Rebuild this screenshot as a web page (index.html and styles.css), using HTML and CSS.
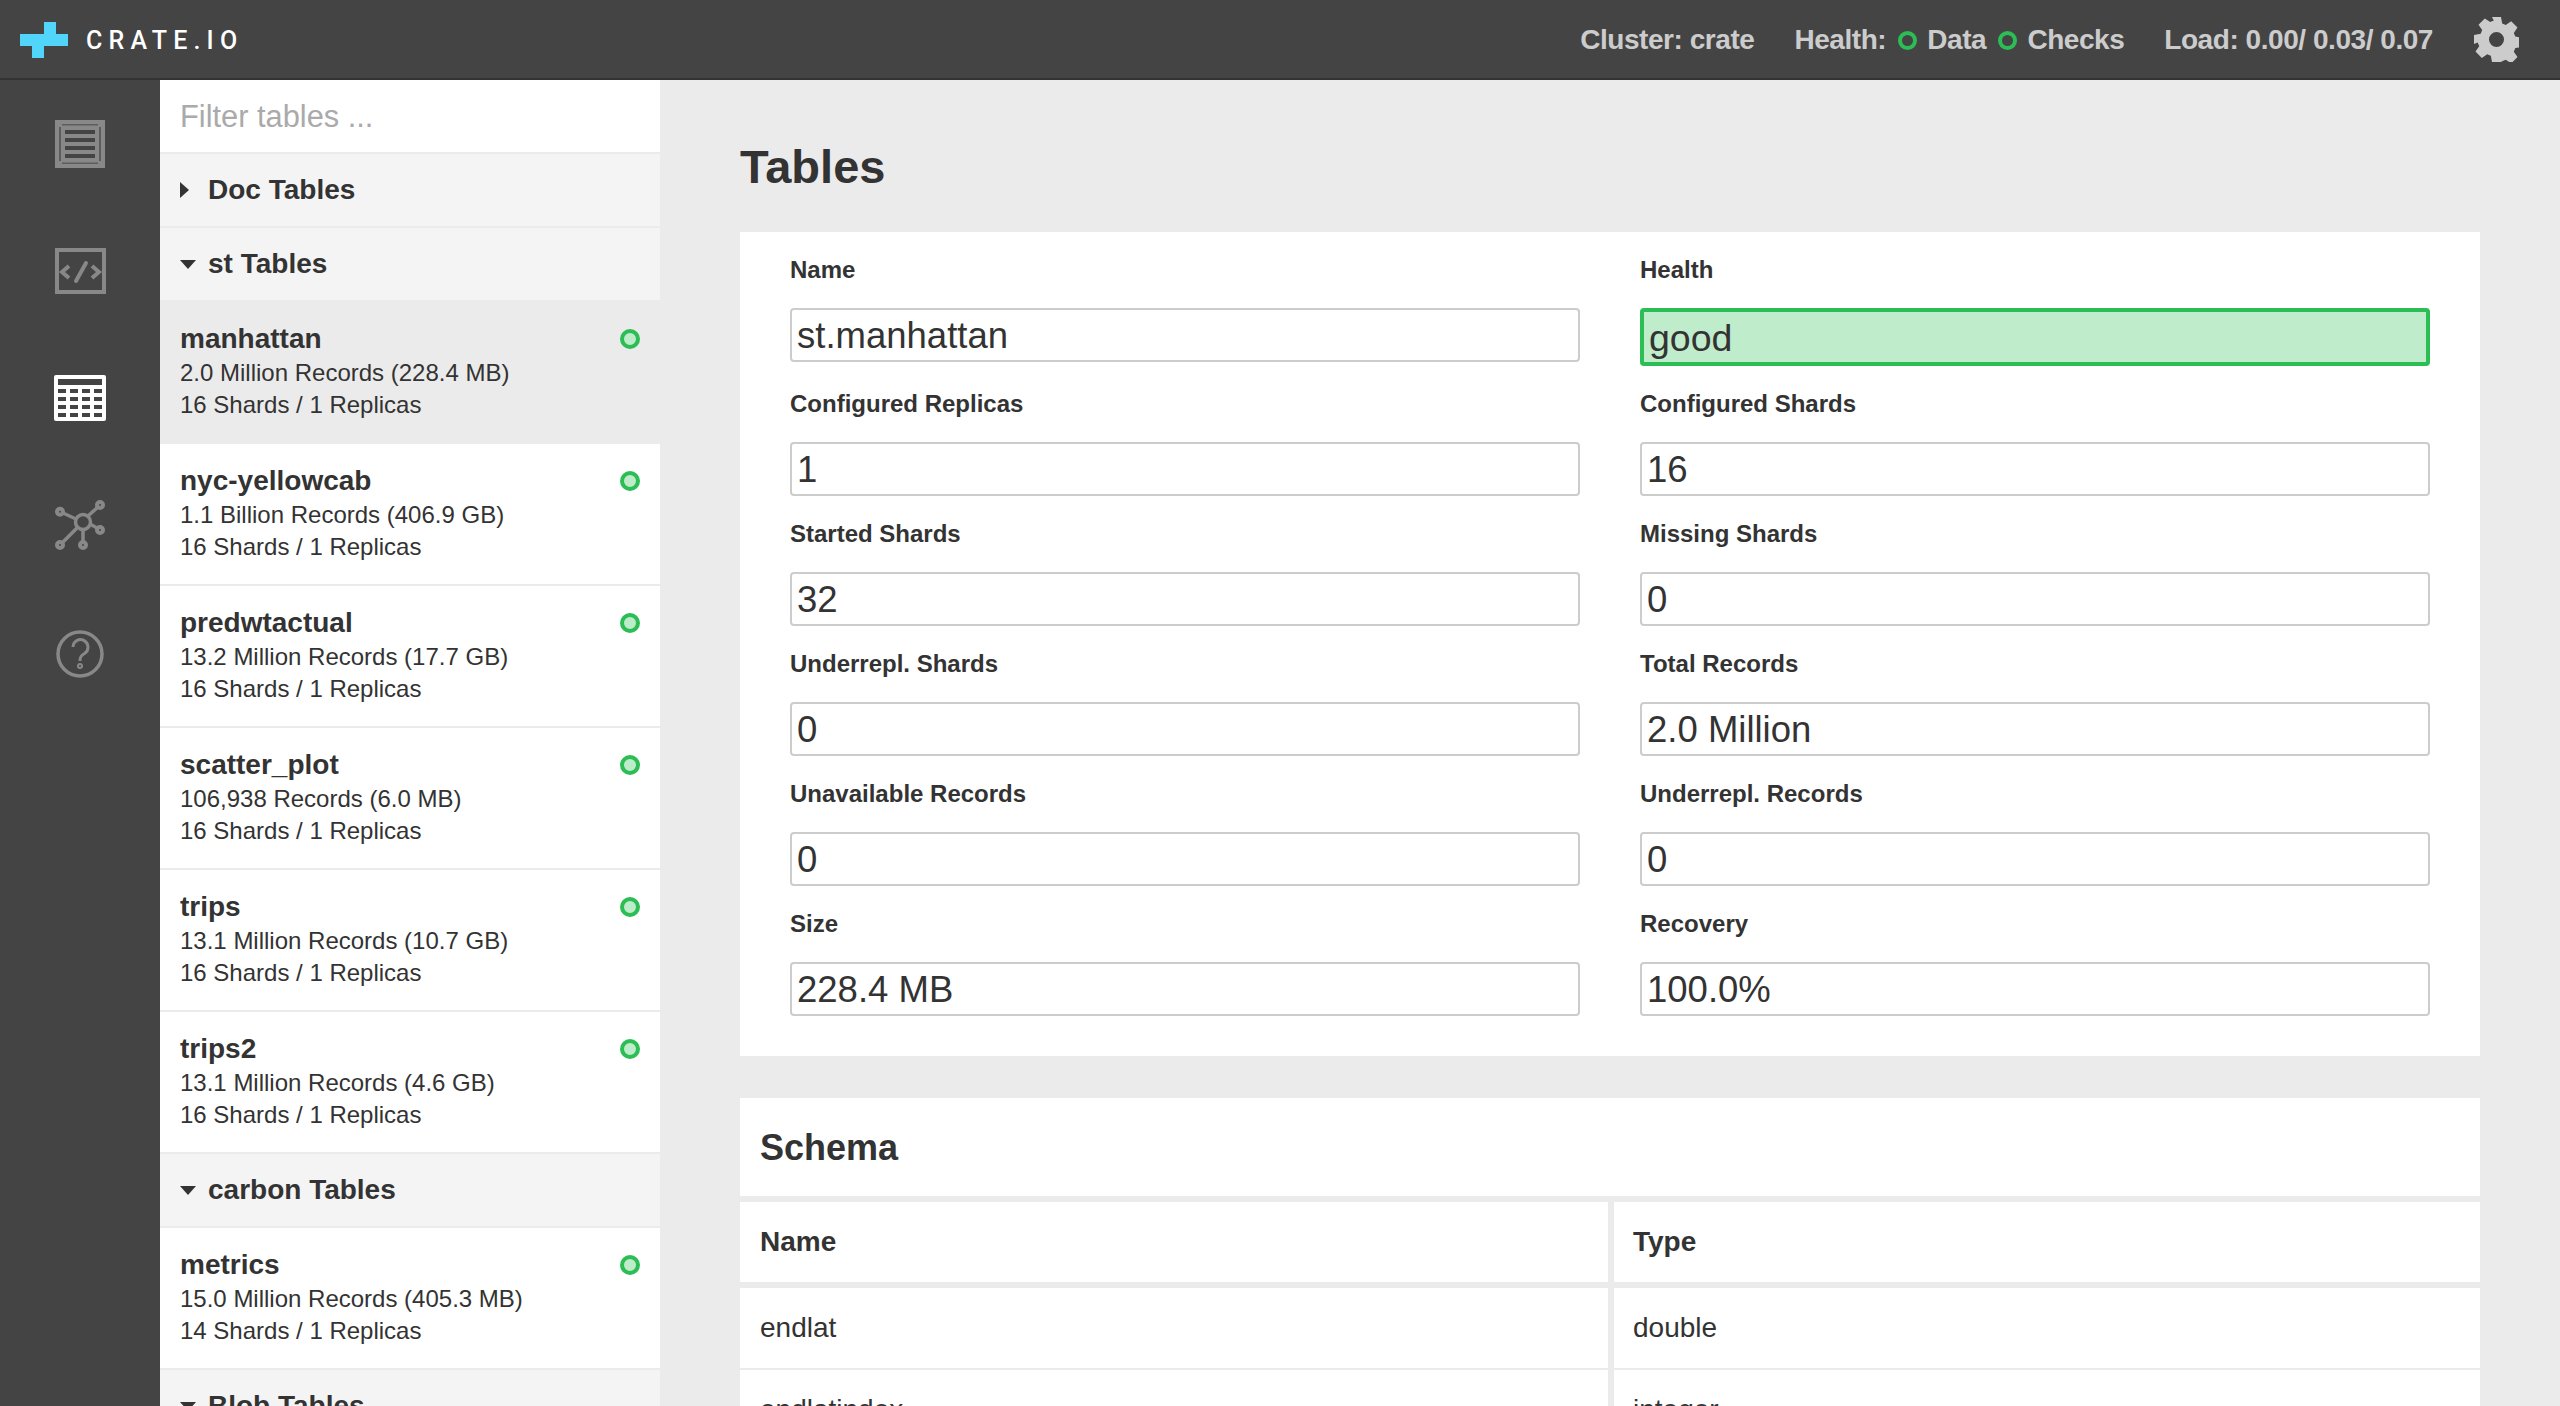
FILE: index.html
```html
<!DOCTYPE html>
<html lang="en">
    <head>
        <meta charset="UTF-8" />
        <meta name="viewport" content="width=device-width, initial-scale=1.0" />
        <title>Tables</title>
        <link rel="stylesheet" href="styles.css">
    </head>
    <body>
        <header class="topbar">
            <a class="brand" href="#">
                <svg class="brand-mark" viewBox="0 0 48 36" width="48" height="36">
                    <path fill="#52d5fb" d="M24 0h12v12h12v12H24v12H12V24H0V12h24z"/>
                </svg>
                <span class="brand-name">CRATE.IO</span>
            </a>
            <div class="status">
                <span class="status-item">Cluster: crate</span>
                <span class="status-item status-health">
                    Health:
                    <i class="ring"></i> Data
                    <i class="ring"></i> Checks
                </span>
                <span class="status-item">Load: 0.00/ 0.03/ 0.07</span>
                <svg class="gear" viewBox="0 0 45 45" width="45" height="45">
                    <path fill="#cccccc" fill-rule="evenodd" d="M18 0h9l1.2 6.4 3.6 1.5 5.4-3.7 6.3 6.3-3.7 5.4 1.5 3.6 6.7 1.3v9l-6.7 1.3-1.5 3.6 3.7 5.4-6.3 6.3-5.4-3.7-3.6 1.5L27 45h-9l-1.2-6.3-3.6-1.500-5.400 3.700-6.300-6.300 3.700-5.400-1.500-3.600L0 27v-9l6.700-1.300 1.500-3.600-3.700-5.400 6.300-6.300 5.400 3.700 3.600-1.500zM22.500 15a7.500 7.500 0 1 0 0 15 7.500 7.500 0 0 0 0-15z"/>
                </svg>
            </div>
        </header>

        <div class="layout">
            <nav class="nav">
                <a class="nav-item" href="#">
                    <svg viewBox="0 0 50 48" width="50" height="48">
                        <rect width="50" height="48" fill="#888888"/>
                        <path fill="#444444" d="M10 10h30v4H10zM10 18h30v4H10zM10 26h30v4H10zM10 34h30v4H10z"/>
                        <path fill="#5c5c5c" d="M4 7h2v34H4zM44 7h2v34h-2zM7 4h36v1.500H7zM7 42.500h36V44H7z"/>
                    </svg>
                </a>
                <a class="nav-item" href="#">
                    <svg viewBox="0 0 51 46" width="51" height="46" fill="none" stroke="#888888" stroke-linecap="round">
                        <rect x="2" y="2" width="47" height="42" stroke-width="4"/>
                        <path stroke-width="4" stroke-linejoin="miter" stroke-linecap="butt" d="M14 18l-7 6 7 6M37 18l7 6-7 6"/>
                        <path stroke-width="4" d="M31 15l-10 18"/>
                    </svg>
                </a>
                <a class="nav-item" href="#">
                    <svg viewBox="0 0 52 46" width="52" height="46">
                        <path fill="#ffffff" fill-rule="evenodd" d="M2 0h48a2 2 0 0 1 2 2v42a2 2 0 0 1-2 2H2a2 2 0 0 1-2-2V2a2 2 0 0 1 2-2zM4 4v6h44V4zM4 14v4h8v-4zM16 14v4h8v-4zM28 14v4h8v-4zM40 14v4h8v-4zM4 22v4h8v-4zM16 22v4h8v-4zM28 22v4h8v-4zM40 22v4h8v-4zM4 30v4h8v-4zM16 30v4h8v-4zM28 30v4h8v-4zM40 30v4h8v-4zM4 38v4h8v-4zM16 38v4h8v-4zM28 38v4h8v-4zM40 38v4h8v-4z"/>
                    </svg>
                </a>
                <a class="nav-item" href="#">
                    <svg viewBox="0 0 50 50" width="50" height="50" fill="none" stroke="#888888" stroke-width="3.500">
                        <circle cx="28" cy="22" r="7.500"/>
                        <path d="M8 13l13 6M33 16l10-9M35 24l7 4M28 30v12M22 28L7 43"/>
                        <circle cx="5" cy="11.700" r="3" stroke-width="4"/>
                        <circle cx="45" cy="5" r="3" stroke-width="4"/>
                        <circle cx="45" cy="30" r="3" stroke-width="4"/>
                        <circle cx="5" cy="45" r="3" stroke-width="4"/>
                        <circle cx="28" cy="45" r="3" stroke-width="4"/>
                    </svg>
                </a>
                <a class="nav-item nav-help" href="#">
                    <svg viewBox="0 0 48 48" width="48" height="48" fill="none" stroke="#888888" stroke-width="3.500">
                        <circle cx="24" cy="24" r="22"/>
                        <path stroke-width="3" d="M17 17a7.500 7.500 0 1 1 11.500 6.500c-3 1.800-4.500 3-4.500 7.500"/>
                        <circle cx="24" cy="36" r="2" stroke-width="2"/>
                    </svg>
                </a>
            </nav>

            <aside class="tables">
                <div class="filter">Filter tables ...</div>

                <div class="group"><i class="caret caret-right"></i>Doc Tables</div>
                <div class="group"><i class="caret"></i>st Tables</div>

                <div class="table-row active">
                    <h3>manhattan <i class="dot"></i></h3>
                    <p>2.0 Million Records (228.4 MB)</p>
                    <p>16 Shards / 1 Replicas</p>
                </div>
                <div class="table-row">
                    <h3>nyc-yellowcab <i class="dot"></i></h3>
                    <p>1.1 Billion Records (406.9 GB)</p>
                    <p>16 Shards / 1 Replicas</p>
                </div>
                <div class="table-row">
                    <h3>predwtactual <i class="dot"></i></h3>
                    <p>13.2 Million Records (17.7 GB)</p>
                    <p>16 Shards / 1 Replicas</p>
                </div>
                <div class="table-row">
                    <h3>scatter_plot <i class="dot"></i></h3>
                    <p>106,938 Records (6.0 MB)</p>
                    <p>16 Shards / 1 Replicas</p>
                </div>
                <div class="table-row">
                    <h3>trips <i class="dot"></i></h3>
                    <p>13.1 Million Records (10.7 GB)</p>
                    <p>16 Shards / 1 Replicas</p>
                </div>
                <div class="table-row">
                    <h3>trips2 <i class="dot"></i></h3>
                    <p>13.1 Million Records (4.6 GB)</p>
                    <p>16 Shards / 1 Replicas</p>
                </div>

                <div class="group"><i class="caret"></i>carbon Tables</div>
                <div class="table-row">
                    <h3>metrics <i class="dot"></i></h3>
                    <p>15.0 Million Records (405.3 MB)</p>
                    <p>14 Shards / 1 Replicas</p>
                </div>

                <div class="group"><i class="caret"></i>Blob Tables</div>
            </aside>

            <main class="content">
                <h1>Tables</h1>

                <section class="panel form">
                    <div class="field"><label>Name</label><div class="value">st.manhattan</div></div>
                    <div class="field"><label>Health</label><div class="value good">good</div></div>
                    <div class="field"><label>Configured Replicas</label><div class="value">1</div></div>
                    <div class="field"><label>Configured Shards</label><div class="value">16</div></div>
                    <div class="field"><label>Started Shards</label><div class="value">32</div></div>
                    <div class="field"><label>Missing Shards</label><div class="value">0</div></div>
                    <div class="field"><label>Underrepl. Shards</label><div class="value">0</div></div>
                    <div class="field"><label>Total Records</label><div class="value">2.0 Million</div></div>
                    <div class="field"><label>Unavailable Records</label><div class="value">0</div></div>
                    <div class="field"><label>Underrepl. Records</label><div class="value">0</div></div>
                    <div class="field"><label>Size</label><div class="value">228.4 MB</div></div>
                    <div class="field"><label>Recovery</label><div class="value">100.0%</div></div>
                </section>

                <section class="panel schema-title"><h2>Schema</h2></section>
                <table class="schema">
                    <tr><th>Name</th><th>Type</th></tr>
                    <tr><td>endlat</td><td>double</td></tr>
                    <tr><td>endlatindex</td><td>integer</td></tr>
                </table>
            </main>
        </div>
    </body>
</html>
```

FILE: styles.css
```css
* {
    box-sizing: border-box;
}
html,
body {
    height: 100%;
}
body {
    margin: 0;
    overflow: hidden;
    display: flex;
    flex-direction: column;
    font-family: "Liberation Sans", Arial, sans-serif;
    color: #333333;
    background-color: #ebebeb;
}
a {
    text-decoration: none;
    color: inherit;
}

/* top bar */
.topbar {
    flex: none;
    height: 80px;
    display: flex;
    align-items: center;
    justify-content: space-between;
    padding: 2px 41px 0 20px;
    background-color: #444444;
    border-bottom: 2px solid #333333;
}
.brand {
    display: flex;
    align-items: center;
}
.brand-mark {
    display: block;
    margin-right: 18px;
}
.brand-name {
    font-family: Roboto, sans-serif;
    font-weight: 500;
    font-size: 25px;
    letter-spacing: 6.2px;
    color: #ffffff;
}
.status {
    display: flex;
    align-items: center;
    font-size: 28px;
    font-weight: bold;
    letter-spacing: -0.45px;
    color: #cccccc;
}
.status-item {
    margin-right: 40px;
    white-space: nowrap;
}
.status-item:nth-child(3) {
    margin-right: 41px;
}
.ring {
    display: inline-block;
    width: 19px;
    height: 19px;
    margin: 0 3px 0 4.5px;
    border: 4px solid #2dbd55;
    border-radius: 50%;
    vertical-align: -1px;
}
.gear {
    display: block;
    margin-top: -1px;
}

.layout {
    flex: 1;
    display: flex;
    min-height: 0;
}

/* icon column */
.nav {
    flex: none;
    width: 160px;
    background-color: #444444;
}
.nav-item {
    height: 127px;
    display: flex;
    align-items: center;
    justify-content: center;
}
.nav-help {
    margin-top: 2px;
}

/* tables list */
.tables {
    flex: none;
    width: 500px;
    overflow: hidden;
    background-color: #ffffff;
}
.filter {
    height: 74px;
    padding-left: 20px;
    font-size: 30.8px;
    line-height: 73px;
    color: #aaaaaa;
    border-bottom: 2px solid #ebebeb;
}
.group {
    height: 74px;
    display: flex;
    align-items: center;
    padding-left: 20px;
    font-size: 28px;
    font-weight: bold;
    background-color: #f4f4f4;
    border-bottom: 2px solid #ebebeb;
}
.caret {
    width: 0;
    height: 0;
    margin-right: 12px;
    border-style: solid;
    border-width: 9px 8px 0 8px;
    border-color: #333333 transparent transparent transparent;
}
.caret-right {
    margin-right: 19px;
    border-width: 8px 0 8px 9px;
    border-color: transparent transparent transparent #333333;
}
.table-row {
    height: 142px;
    padding: 19px 20px 0;
    border-bottom: 2px solid #ebebeb;
}
.table-row.active {
    background-color: #ebebeb;
}
.table-row h3 {
    display: flex;
    align-items: center;
    justify-content: space-between;
    margin: 0;
    font-size: 28px;
    line-height: 36px;
}
.table-row p {
    margin: 0;
    font-size: 24px;
    line-height: 32px;
}
.dot {
    flex: none;
    width: 20px;
    height: 20px;
    margin-top: -1px;
    background-color: #bdecc9;
    border: 4px solid #2dbd55;
    border-radius: 50%;
}

/* main area */
.content {
    flex: 1;
    min-width: 0;
    padding: 0 80px;
}
h1 {
    margin: 0;
    height: 152px;
    font-size: 47px;
    line-height: 174px;
}
.panel {
    background-color: #ffffff;
}
.form {
    display: grid;
    grid-template-columns: 790px 790px;
    column-gap: 60px;
    align-items: start;
    padding: 0 50px 40px;
}
.field label {
    display: block;
    height: 76px;
    font-size: 24px;
    font-weight: bold;
    line-height: 75px;
}
.value {
    height: 54px;
    padding-left: 5px;
    font-size: 36.5px;
    line-height: 52px;
    background-color: #ffffff;
    border: 2px solid #cccccc;
    border-radius: 4px;
}
.value.good {
    height: 58px;
    font-size: 37.500px;
    line-height: 52px;
    background-color: #bfecca;
    border: 4px solid #2dbd55;
}
.schema-title {
    height: 98px;
    margin-top: 42px;
    padding-left: 20px;
}
h2 {
    margin: 0;
    font-size: 36px;
    line-height: 100px;
}
.schema {
    width: 100%;
    margin-top: 6px;
    table-layout: fixed;
    border-collapse: separate;
    border-spacing: 0;
}
.schema th,
.schema td {
    padding: 0 20px;
    font-size: 28px;
    text-align: left;
    background-color: #ffffff;
    background-clip: padding-box;
    border-right: 6px solid #ebebeb;
}
.schema th {
    height: 86px;
    border-bottom: 6px solid #ebebeb;
}
.schema td {
    height: 82px;
    border-bottom: 2px solid #ebebeb;
}
.schema th:first-child,
.schema td:first-child {
    width: 874px;
}
.schema th:last-child,
.schema td:last-child {
    padding-left: 19px;
    border-right: 0;
}
```
